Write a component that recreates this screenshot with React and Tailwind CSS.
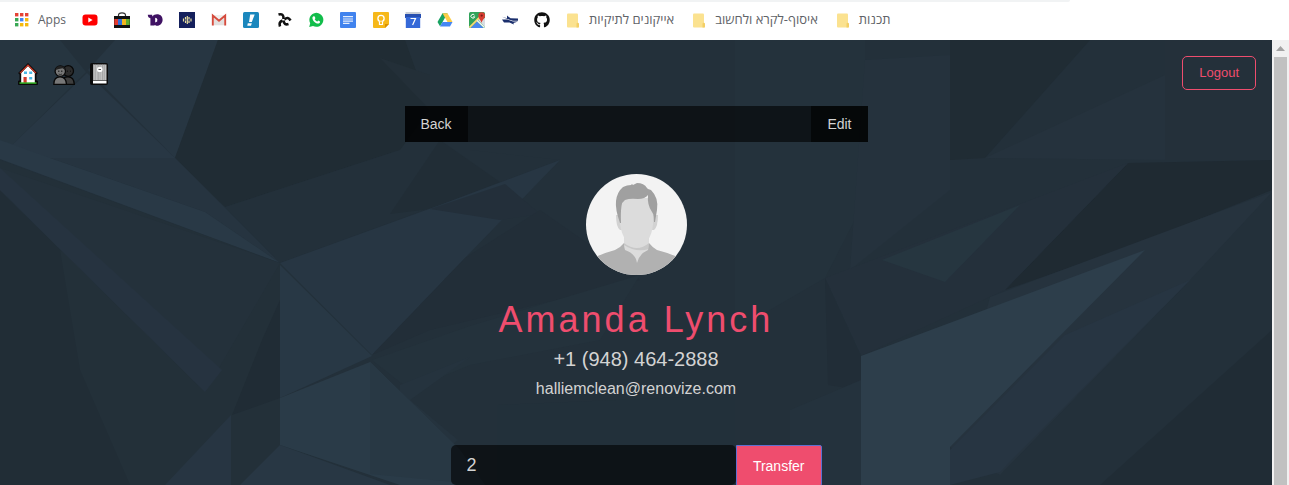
import React from "react";
import { FaGithub } from "react-icons/fa";

const shards = [
  ["0,40 60,40 86,72 12,145 0,141", "#263540"],
  ["115,40 218,40 175,158 88,70", "#273642"],
  ["87,73 175,158 0,158 12,145", "#283744"],
  ["218,40 405,40 430,110 400,150 225,207 175,158", "#202c34"],
  ["380,58 430,75 430,110", "#232f38"],
  ["50,158 175,158 280,263 205,212", "#263440"],
  ["0,140 50,158 205,212 280,263 0,159", "#293946"],
  ["0,160 280,263 280,485 0,485", "#233039"],
  ["0,190 60,250 80,370 130,485 0,485", "#212d36"],
  ["0,168 0,190 205,392 280,263", "#24313b"],
  ["0,168 0,190 205,392 222,370", "#263340"],
  ["262,340 280,300 280,398 232,415", "#202c35"],
  ["225,207 400,150 470,150 560,160 280,263", "#23303a"],
  ["390,214 440,140 500,182 430,209", "#212d36"],
  ["280,263 440,205 560,160 465,258 372,355", "#273643"],
  ["430,209 505,184 540,214 500,220", "#232f3a"],
  ["372,355 465,258 540,210 640,280 430,330", "#222e38"],
  ["372,360 470,326 640,275 600,340 470,365 410,390", "#24323c"],
  ["400,385 470,357 410,400 458,440 400,485", "#25333e"],
  ["497,405 735,395 735,485 497,485", "#22303a"],
  ["280,265 372,356 280,398", "#283845"],
  ["280,398 370,362 460,450 485,485 400,485 280,445", "#2a3b48"],
  ["370,362 460,450 485,485 370,474", "#283844"],
  ["231,415 231,485 165,485", "#273542"],
  ["280,445 390,485 240,485", "#283744"],
  ["735,40 865,40 865,200 825,278 735,330", "#24323c"],
  ["865,60 950,55 950,190 850,270", "#25323d"],
  ["950,55 950,40 1090,40 985,158 950,160", "#202c34"],
  ["985,158 1165,75 1165,160", "#25323d"],
  ["1165,40 1272,40 1272,160 1165,160", "#24303a"],
  ["1005,290 1128,163 1272,160 1272,190 1140,243", "#1f2a32"],
  ["825,278 1128,163 1005,290 861,356", "#24303b"],
  ["882,260 1020,205 945,282", "#263640"],
  ["990,297 1272,192 1190,280 1000,475 950,447", "#26333e"],
  ["1065,335 1190,280 1000,472 950,485 950,450", "#273542"],
  ["861,356 1145,250 950,447 950,485 861,485", "#2d3e4b"],
  ["1272,330 1272,485 1100,485", "#202c35"],
  ["825,278 861,356 861,390 828,385", "#212d37"],
  ["790,410 861,380 861,485 790,485", "#24323d"],
];

function Backdrop() {
  return (
    <svg className="absolute inset-0 h-full w-full" viewBox="0 40 1272 445" preserveAspectRatio="none" aria-hidden="true">
      <rect x="0" y="40" width="1272" height="445" fill="#23303a" />
      {shards.map(([points, fill]) => (
        <polygon key={points} points={points} fill={fill} />
      ))}
    </svg>
  );
}

function Glyph({ children }) {
  return (
    <svg className="size-full" viewBox="0 0 16 16" aria-hidden="true">
      {children}
    </svg>
  );
}

const bookmarks = [
  ["YouTube", <Glyph><rect x="0.5" y="2.5" width="15" height="11" rx="3" fill="#f00" /><path d="M6.3 5.6v4.8L10.6 8z" fill="#fff" /></Glyph>],
  ["Store", <Glyph><path d="M4.500 5V3.200Q4.500.8 8 .8t3.500 2.400V5" fill="none" stroke="#333" strokeWidth="1.200" /><rect x="0" y="4" width="16" height="12" fill="#111" /><path d="M.3 7H4v6H.3z" fill="#e43b2f" /><path d="M4 7h4v6H4z" fill="#2f6fdb" /><path d="M8 7h4v6H8z" fill="#f4b51e" /><path d="M12 7h3.700v6H12z" fill="#5fae2e" /></Glyph>],
  ["D", <Glyph><path d="M.8 2.800h4.400v1.600C6.500 3 8.200 2.300 10 2.300c3.400 0 5.600 2.200 5.600 5.500S13.300 13.800 10 13.800c-1 0-1.500-.3-2-.7l-.8.500H3.400V6.300C1.800 6 .8 4.800.8 2.800z" fill="#3f1263" /><path d="M8.200 5.800v4.700l2-1.100V7.300q0-1.200-2-1.500z" fill="#fff" /></Glyph>],
  ["Audio", <Glyph><rect width="16" height="16" fill="#15205c" /><path d="M4.500 6.500v3M6.500 5v2.500M6.500 8.500v2.500M8.300 4v8M10 5v2.500M10 8.500v2.500M12 6.500v3" stroke="#e9dfa0" strokeWidth="1.200" /></Glyph>],
  ["Gmail", <Glyph><path d="M1.500 3h13v10.500h-13z" fill="#f1efee" /><path d="M3 13V6l5 4 5-4v7" fill="#e3e0df" /><path d="M1.800 13.500v-10L8 8.800l6.200-5.300v10" fill="none" stroke="#d54b3d" strokeWidth="1.900" /></Glyph>],
  ["Alerts", <Glyph><rect width="16" height="16" rx="1.500" fill="#1b87bd" /><path d="M7.200 2.500h4.500L8.800 10H6z" fill="#fff" /><path d="M4.800 11.200h4l-.8 2.600H4.300z" fill="#fff" /></Glyph>],
  ["Codepad", <Glyph><g fill="none" stroke="#111" strokeWidth="2.600"><path d="M2.500 2.500Q8 1 7.500 7" /><path d="M8.500 7.500Q12 4 14.500 8.500" /><path d="M7.500 8.500Q8 13.500 12.500 12" /><path d="M6.500 8.500Q2.500 10 4 14.500" /></g></Glyph>],
  ["WhatsApp", <Glyph><path d="M1.200 15l1-3.800A7 7 0 1 1 5 14z" fill="#12bd4b" /><path d="M5.500 4.300l1.300.2.600 1.700-.7 1c.7 1.200 1.500 1.900 2.700 2.400l.9-1 1.700.8c.2 1.300-.8 2.200-2 2.200C7.300 11.400 4.600 8.700 4.400 6c0-.8.5-1.400 1.100-1.700z" fill="#fff" /></Glyph>],
  ["Docs", <Glyph><rect width="16" height="16" rx="1" fill="#4183ee" /><path d="M3 4.700h10M3 7h10M3 9.200h10M3 11.400h6.500" stroke="#e5eefc" strokeWidth="1.200" /></Glyph>],
  ["Keep", <Glyph><path d="M1 0h14q1 0 1 1v11l-4 4H1q-1 0-1-1V1q0-1 1-1z" fill="#f6b81a" /><path d="M12 16v-4h4z" fill="#d99100" /><circle cx="8" cy="6.500" r="3.100" fill="none" stroke="#fff" strokeWidth="1.300" /><path d="M6.500 9.500v3h3v-3" fill="#f6b81a" stroke="#fff" strokeWidth="1.200" /></Glyph>],
  ["Calendar", <Glyph><path d="M.5 0h15v4H.5z" fill="#c9ced6" /><path d="M0 2h16v4H0z" fill="#274fb0" /><path d="M.8 5h14.400v11H.8z" fill="#3569d8" /><path d="M5.500 6.500h5L7.600 13" fill="none" stroke="#fff" strokeWidth="1.200" /></Glyph>],
  ["Drive", <Glyph><path d="M5.500 1.200h5L6 9.300l-3 5L.5 10z" fill="#18a362" /><path d="M5.500 1.200h5l5 8.800h-5z" fill="#fccd48" /><path d="M5.500 10h10L13 14.500H3z" fill="#4687f4" /></Glyph>],
  ["Maps", <Glyph><rect width="16" height="16" rx="1.500" fill="#31a35a" /><path d="M8.500 7.500L16 15V6z" fill="#d9dde2" /><path d="M1.500 16L8 9.500l6.500 6.500z" fill="#4a87ee" /><path d="M.5 15.500L11 5" stroke="#f7d774" strokeWidth="1.800" /><path d="M8 8.500l7.500 7" stroke="#f3f4f6" strokeWidth="1.500" /><path d="M12.500 11C12 8 9.300 6.500 9.300 3.700a3.350 3.350 0 0 1 6.700 0C16 6.500 13 8 12.500 11z" fill="#d93e32" /><circle cx="12.700" cy="3.600" r="1.100" fill="#7c1d17" /><path d="M5.500 3.200A1.900 1.900 0 1 0 5.700 4.800H4.200" fill="none" stroke="#fff" strokeWidth="1" /></Glyph>],
  ["Transit", <Glyph><path d="M0 4.800l5 1.400V3.500l3.500 2.800L16 6.500v2.300h-5L5.500 7z" fill="#1b2f6d" /><path d="M0 7.500h5.500l5.500 2h5l-4.500 1.600.3 1.400L7.500 10.500H2z" fill="#1b2f6d" /></Glyph>],
  ["GitHub", <FaGithub className="size-full text-[#111]" />],
];

const folders = ["אייקונים לתיקיות", "איסוף-לקרא ולחשוב", "תכנות"];
const appDots = ["#e54335", "#e54335", "#e54335", "#38a853", "#4285f4", "#f6b90c", "#38a853", "#f6b90c", "#f6b90c"];

function BookmarksBar() {
  return (
    <header className="h-10 shrink-0 bg-white font-['Open_Sans','Noto_Sans',sans-serif] text-[#5f6368]">
      <div className="h-[2px] w-[83%] rounded-br-lg bg-[#f1f3f4]" />
      <nav aria-label="Bookmarks" className="flex h-9 items-center pl-[15px]">
        <a href="#apps" className="flex items-center gap-[9px] pr-4 text-xs">
          <svg className="size-[14px]" viewBox="0 0 14 14" aria-hidden="true">
            {appDots.map((fill, i) => (
              <rect key={i} x={(i % 3) * 5} y={Math.floor(i / 3) * 5} width="3.400" height="3.400" fill={fill} />
            ))}
          </svg>
          Apps
        </a>
        <div className="flex w-[468px] justify-between">
          {bookmarks.map(([name, icon]) => (
            <a key={name} href={"#" + name} aria-label={name} className="size-4">
              {icon}
            </a>
          ))}
        </div>
        <div className="flex gap-[18px] pl-4 text-[13px]">
          {folders.map((name) => (
            <button key={name} type="button" className="flex items-center gap-[9px] whitespace-nowrap">
              <svg className="h-[15px] w-[14px]" viewBox="0 0 14 15" aria-hidden="true">
                <path d="M2 .5h9q1 0 1 1V14.500H2q-1 0-1-1v-12q0-1 1-1z" fill="#fbe290" />
                <path d="M10.500 14.500V11q0-1.200 1.300-1.200T13 11v3.500z" fill="#f3cf66" />
              </svg>
              <span dir="rtl">{name}</span>
            </button>
          ))}
        </div>
      </nav>
    </header>
  );
}

function HomeIcon() {
  return (
    <svg className="h-6 w-5" viewBox="0 0 20 24" aria-hidden="true">
      <path d="M10 1.500L.7 11l1.300 1.700V19H.5v3.500h19V19H18v-6.300L19.300 11z" fill="#0b0b0b" stroke="#0b0b0b" strokeLinejoin="round" />
      <path d="M10 4L3.200 11v10h13.600V11z" fill="#fff" />
      <path d="M2 11.200L10 3.200l8 8" fill="none" stroke="#d23320" strokeWidth="1.200" />
      <path d="M6 9.500h3V12H6zM11.200 9.500h3V12h-3zM11.200 15h3v2.500h-3z" fill="#4cb8e6" />
      <path d="M5.500 15h3.200v6H5.500z" fill="#d23b2e" />
      <path d="M1.500 20.300h17v1.500h-17z" fill="#35b525" />
    </svg>
  );
}

function ContactsIcon() {
  return (
    <svg className="h-6 w-[22px]" viewBox="0 0 22 24" aria-hidden="true">
      <g stroke="#080808" strokeWidth="1.300">
        <path d="M9 22.300v-4q1-3.500 6-3.500 6 0 6.300 7.500z" fill="#3e3e3e" />
        <circle cx="15.200" cy="9" r="5.300" fill="#2c2c2c" />
        <path d="M.8 22.300q0-7.500 6.200-7.500t6.500 7.500z" fill="#777" />
        <circle cx="7.300" cy="9.200" r="5.200" fill="#777" />
      </g>
      <path d="M2.300 8Q3 4 7.300 4t5 4L9.500 6.300Q6 7 2.300 8z" fill="#222" />
      <path d="M5.800 8.500V10M8.800 8.500V10M14.500 8.500V10M17.500 8.500V10" stroke="#151515" />
      <path d="M5.600 12q1.700 1.200 3.400 0" fill="none" stroke="#222" strokeWidth=".8" />
    </svg>
  );
}

function NotebookIcon() {
  return (
    <svg className="h-6 w-[18px]" viewBox="0 0 18 24" aria-hidden="true">
      <rect x="0" y="1" width="18" height="22" rx="2" fill="#0b0b0b" />
      <path d="M3 2.500h13.500v16H3z" fill="#c2c2c2" />
      <path d="M3 3h13.500M3 5h13.500M3 7h13.500M3 9h13.500M3 11h13.500M3 13h13.500M3 15h13.500M3 17h13.500" stroke="#8a8a8a" strokeWidth="1" strokeDasharray="1.300 .9 .8 1.500" />
      <path d="M3 19h13.500v2.500H3z" fill="#fff" />
      <rect x="7" y="5" width="5.500" height="5" rx="2" fill="#fff" />
      <path d="M8.500 7.500H11" stroke="#555" />
    </svg>
  );
}

function Avatar() {
  return (
    <svg className="size-[101px] rounded-full" viewBox="0 0 101 101" role="img" aria-label="Contact portrait">
      <rect width="101" height="101" fill="#f3f3f3" />
      <path d="M30 41h42q0 12-4 15H34q-4-3-4-15z" fill="#d2d2d2" />
      <path d="M38 62h25v17l-12 12-13-12z" fill="#dcdcdc" />
      <path d="M38 69q13 10 25 0v6q-13 4-25-4z" fill="#c8c8c8" />
      <path d="M34 24h33v26q-2 21-16 21T34 50z" fill="#dcdcdc" />
      <path d="M0 101V88q14-8 29-12 5-2 9-7 0 4 1 7 11 4 12 13 2-9 11-13 1-3 1-7 4 5 8 7 16 4 30 12v13z" fill="#b1b1b1" />
      <path d="M34 49q-5-14-4-22 1-9 7-14 4-2 8-2l1-1 1 1 4-2q7 0 10 5l1 1 3 1q8 8 6 20l-2 12h-1q0-8-2-10-5-7-4-17-3 4-10 4-8-1-13 1-3 2-3.500 6-1 7-.5 17z" fill="#a0a0a0" />
    </svg>
  );
}

export default function App() {
  return (
    <div className="flex h-screen flex-col overflow-hidden font-['Liberation_Sans',Arial,sans-serif]">
      <BookmarksBar />
      <div className="flex min-h-0 flex-1">
        <main className="relative min-w-0 flex-1 overflow-hidden bg-[#23303a]">
          <Backdrop />
          <div className="relative flex flex-col text-[#d3d3d3]">
            <div className="flex items-start justify-between px-4 pt-4">
              <nav aria-label="Main" className="flex gap-[15px] pt-[6px] pl-[2px]">
                <a href="#home" aria-label="Home"><HomeIcon /></a>
                <a href="#contacts" aria-label="Contacts"><ContactsIcon /></a>
                <a href="#statistics" aria-label="Statistics"><NotebookIcon /></a>
              </nav>
              <button type="button" className="h-[34px] rounded-[5px] border border-[#ef4d6e] px-4 text-[13px] text-[#ef4d6e]">
                Logout
              </button>
            </div>
            <div className="mx-auto mt-4 flex h-9 w-full max-w-[463px] justify-between bg-black/60 text-sm">
              <button type="button" className="bg-black/60 px-4">Back</button>
              <button type="button" className="bg-black/60 px-4">Edit</button>
            </div>
            <section className="mt-8 flex flex-col items-center">
              <Avatar />
              <h1 className="mt-6 text-4xl leading-[42px] tracking-[3px] text-[#ef4d6e]">Amanda Lynch</h1>
              <p className="mt-1 text-xl leading-7">+1 (948) 464-2888</p>
              <p className="mt-1 text-base leading-6">halliemclean@renovize.com</p>
            </section>
            <form className="mx-auto mt-11 flex w-full max-w-[371px]" onSubmit={(e) => e.preventDefault()}>
              <input
                type="text"
                aria-label="Amount"
                defaultValue="2"
                className="h-10 min-w-0 flex-1 rounded-[5px] bg-black/60 px-4 text-lg outline-none"
              />
              <button type="submit" className="h-[41px] rounded-r-[2px] border border-[#5f6fd0] bg-[#ef4d6e] px-4 text-sm text-white">
                Transfer
              </button>
            </form>
          </div>
        </main>
        <div className="flex w-[17px] shrink-0 flex-col items-center bg-[#f1f1f1]" aria-hidden="true">
          <svg className="h-[17px] w-[9px] shrink-0" viewBox="0 0 9 17">
            <path d="M4.500 6L9 11H0z" fill="#a3a3a3" />
          </svg>
          <div className="w-[13px] flex-1 bg-[#c1c1c1]" />
        </div>
      </div>
    </div>
  );
}
